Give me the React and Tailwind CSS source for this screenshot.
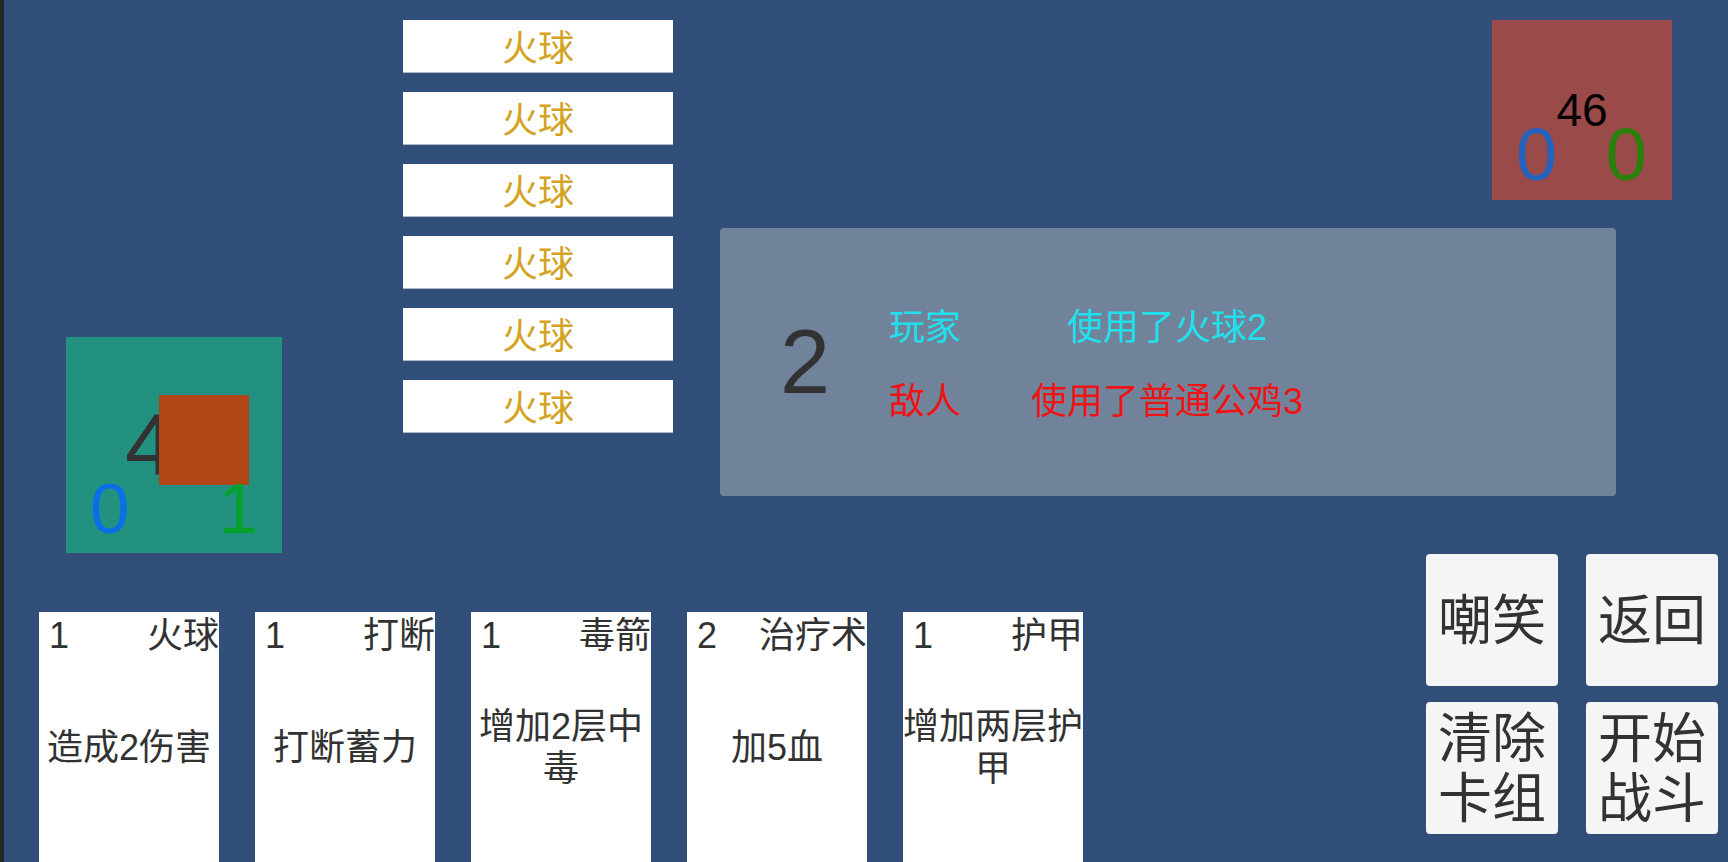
import React from 'react';

// Battle screen: hand of cards, deck list, combat log and unit boxes

const deck = ['火球', '火球', '火球', '火球', '火球', '火球'];

const hand = [
  { cost: 1, name: '火球', desc: ['造成2伤害'] },
  { cost: 1, name: '打断', desc: ['打断蓄力'] },
  { cost: 1, name: '毒箭', desc: ['增加2层中', '毒'] },
  { cost: 2, name: '治疗术', desc: ['加5血'] },
  { cost: 1, name: '护甲', desc: ['增加两层护', '甲'] },
];

const log = [
  { who: '玩家', what: '使用了火球2', color: 'text-[#1fe0ec]' },
  { who: '敌人', what: '使用了普通公鸡3', color: 'text-[#ee1414]' },
];

const actions = [
  ['嘲笑'],
  ['返回'],
  ['清除', '卡组'],
  ['开始', '战斗'],
];

const Card = ({ card }) => (
  <div className="w-[180px] h-[272px] shrink-0 bg-white flex flex-col text-[#323232]">
    <div className="h-[42px] pt-[6px] pl-[10px] flex justify-between text-[36px] leading-none">
      <span>{card.cost}</span>
      <span className="whitespace-nowrap">{card.name}</span>
    </div>
    <div className="flex-1 flex flex-col items-center justify-center text-[36px] leading-[42px] text-center">
      {card.desc.map((line, i) => (
        <span key={i} className="whitespace-nowrap">{line}</span>
      ))}
    </div>
    <div className="h-[42px]" />
  </div>
);

const App = () => {
  return (
    <div className="w-[1728px] h-[862px] overflow-hidden flex bg-[#314f79] font-['Liberation_Sans','Noto_Sans_CJK_SC',sans-serif]">
      {/* editor edge */}
      <div className="w-[4px] shrink-0 bg-[#272727]" />

      <div className="flex-1 flex flex-col min-w-0">
        {/* Top half */}
        <div className="h-[554px] shrink-0 flex">
          {/* Player unit */}
          <div className="w-[399px] shrink-0 pl-[62px] pt-[337px]">
            <div className="relative w-[216px] h-[216px] bg-[#23917f] flex items-center justify-center">
              <span className="text-[88px] leading-none text-[#323232]">46</span>
              <div className="absolute left-[93px] top-[58px] w-[90px] h-[90px] bg-[#b04515]" />
              <span className="absolute left-[24px] bottom-[9px] text-[71px] leading-none text-[#0a6fe6]">0</span>
              <span className="absolute right-[24px] bottom-[9px] text-[71px] leading-none text-[#05a22b]">1</span>
            </div>
          </div>

          {/* Deck list */}
          <div className="w-[270px] shrink-0 pt-[20px] flex flex-col gap-[19px]">
            {deck.map((name, i) => (
              <div
                key={i}
                className="h-[53px] pt-[6px] bg-white border-b border-[#aeb8c8] flex items-center justify-center text-[36px] leading-none text-[#d3a21f]"
              >
                {name}
              </div>
            ))}
          </div>

          {/* Enemy + combat log */}
          <div className="flex-1 flex flex-col pt-[20px]">
            <div className="self-end mr-[56px] relative w-[180px] h-[180px] bg-[#9b4a4a] flex items-center justify-center">
              <span className="text-[46px] leading-none text-black">46</span>
              <span className="absolute left-[24px] bottom-[8px] text-[74px] leading-none text-[#2462be]">0</span>
              <span className="absolute right-[25px] bottom-[8px] text-[74px] leading-none text-[#2a800c]">0</span>
            </div>

            <div className="mt-[28px] ml-[47px] w-[896px] h-[268px] rounded-[4px] bg-[#71829b] flex items-center pl-[60px]">
              <span className="w-[90px] text-[90px] leading-none text-[#323232]">2</span>
              <div className="pt-[6px] grid grid-cols-[110px_374px] auto-rows-[74px] items-center text-center text-[36px] leading-none">
                {log.map((row, i) => (
                  <React.Fragment key={i}>
                    <span className={row.color}>{row.who}</span>
                    <span className={`${row.color} whitespace-nowrap`}>{row.what}</span>
                  </React.Fragment>
                ))}
              </div>
            </div>
          </div>
        </div>

        {/* Bottom half */}
        <div className="flex-1 min-h-0 flex items-start">
          <div className="pl-[35px] pt-[58px] flex gap-[36px]">
            {hand.map((card, i) => (
              <Card key={i} card={card} />
            ))}
          </div>

          <div className="ml-auto mr-[10px] grid grid-cols-[132px_132px] gap-x-[28px] gap-y-[16px]">
            {actions.map((lines, i) => (
              <button
                key={i}
                className="w-[132px] h-[132px] pt-[2px] rounded-[4px] bg-[#f5f5f5] flex flex-col items-center justify-center text-[54px] leading-[60px] text-[#323232]"
              >
                {lines.map((l, j) => (
                  <span key={j}>{l}</span>
                ))}
              </button>
            ))}
          </div>
        </div>
      </div>
    </div>
  );
};

export default App;
